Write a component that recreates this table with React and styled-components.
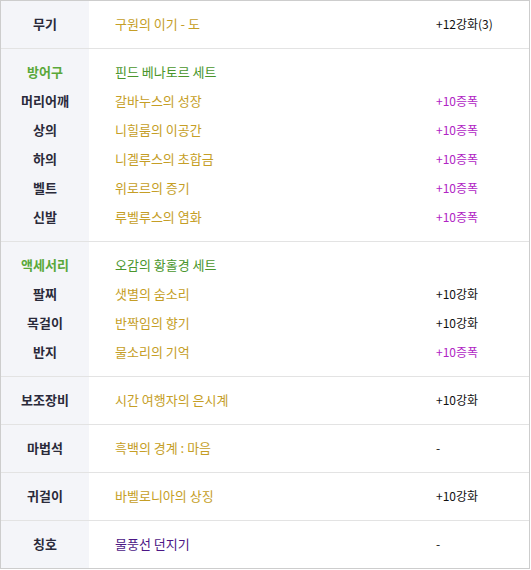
import React from "react";
import styled, { createGlobalStyle } from "styled-components";

const sections = [
  {
    rows: [{ label: "무기", name: "구원의 이기 - 도", value: "+12강화(3)" }],
  },
  {
    rows: [
      { label: "방어구", name: "핀드 베나토르 세트", kind: "set" },
      { label: "머리어깨", name: "갈바누스의 성장", value: "+10증폭", amp: true },
      { label: "상의", name: "니힐룸의 이공간", value: "+10증폭", amp: true },
      { label: "하의", name: "니겔루스의 초합금", value: "+10증폭", amp: true },
      { label: "벨트", name: "위로르의 증기", value: "+10증폭", amp: true },
      { label: "신발", name: "루벨루스의 염화", value: "+10증폭", amp: true },
    ],
  },
  {
    rows: [
      { label: "액세서리", name: "오감의 황홀경 세트", kind: "set" },
      { label: "팔찌", name: "샛별의 숨소리", value: "+10강화" },
      { label: "목걸이", name: "반짝임의 향기", value: "+10강화" },
      { label: "반지", name: "물소리의 기억", value: "+10증폭", amp: true },
    ],
  },
  { rows: [{ label: "보조장비", name: "시간 여행자의 은시계", value: "+10강화" }] },
  { rows: [{ label: "마법석", name: "흑백의 경계 : 마음", value: "-" }] },
  { rows: [{ label: "귀걸이", name: "바벨로니아의 상징", value: "+10강화" }] },
  { rows: [{ label: "칭호", name: "물풍선 던지기", value: "-", kind: "title" }] },
];

const nameColors = {
  item: "#c59e26",
  set: "#4a962c",
  title: "#4c1786",
};

const App = () => (
  <>
    <GlobalStyle />
    <Table>
      {sections.map((section, i) => (
        <Section key={i}>
          {section.rows.map((row) => (
            <Row key={row.label}>
              <Label $set={row.kind === "set"}>{row.label}</Label>
              <Name $color={nameColors[row.kind || "item"]}>{row.name}</Name>
              <Value $amp={row.amp}>{row.value}</Value>
            </Row>
          ))}
        </Section>
      ))}
    </Table>
  </>
);

const GlobalStyle = createGlobalStyle`
  body {
    margin: 0;
    background: #fff;
    font-family: "Noto Sans CJK KR", "Noto Sans", sans-serif;
  }
`;

const Table = styled.div`
  width: 530px;
  box-sizing: border-box;
  border: 1px solid #cdcdcd;
`;

const Section = styled.div`
  padding: 8px 0 10px;
  background: linear-gradient(to right, #f4f5f9 88px, #fff 88px);
  & + & {
    border-top: 1px solid #e3e3e3;
  }
`;

const Row = styled.div`
  display: grid;
  grid-template-columns: 88px 1fr 93px;
  align-items: center;
  height: 29px;
  font-size: 13px;
`;

const Label = styled.div`
  text-align: center;
  font-weight: bold;
  color: ${(p) => (p.$set ? "#5aa83a" : "#2a2a3a")};
`;

const Name = styled.div`
  padding-left: 26px;
  color: ${(p) => p.$color};
`;

const Value = styled.div`
  font-size: 12px;
  color: ${(p) => (p.$amp ? "#b024c4" : "#111")};
`;

export default App;
